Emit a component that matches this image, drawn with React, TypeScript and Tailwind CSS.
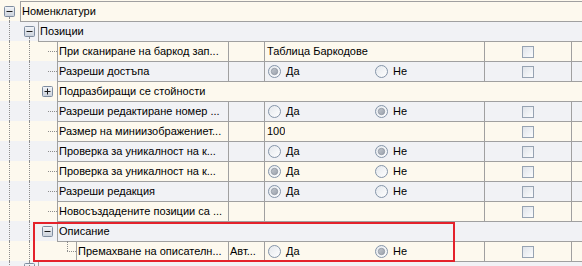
import React from 'react';

type ValueSpec = { text?: string; radio?: 'yes' | 'no' };
type Row =
  | { type: 'group'; level: number; text: string; open: boolean; last?: boolean }
  | { type: 'data'; level: number; name: string; extra?: string; value: ValueSpec };

const rows: Row[] = [
  { type: 'group', level: 0, text: 'Номенклатури', open: true },
  { type: 'group', level: 1, text: 'Позиции', open: true },
  { type: 'data', level: 2, name: 'При сканиране на баркод зап...', value: { text: 'Таблица Баркодове' } },
  { type: 'data', level: 2, name: 'Разреши достъпа', value: { radio: 'yes' } },
  { type: 'group', level: 2, text: 'Подразбиращи се стойности', open: false },
  { type: 'data', level: 2, name: 'Разреши редактиране номер ...', value: { radio: 'no' } },
  { type: 'data', level: 2, name: 'Размер на миниизображениет...', value: { text: '100' } },
  { type: 'data', level: 2, name: 'Проверка за уникалност на к...', value: { radio: 'no' } },
  { type: 'data', level: 2, name: 'Проверка за уникалност на к...', value: { radio: 'yes' } },
  { type: 'data', level: 2, name: 'Разреши редакция', value: { radio: 'yes' } },
  { type: 'data', level: 2, name: 'Новосъздадените позиции са ...', value: {} },
  { type: 'group', level: 2, text: 'Описание', open: true },
  { type: 'data', level: 3, name: 'Премахване на описателн...', extra: 'Авт...', value: { radio: 'no' } },
  { type: 'group', level: 1, text: '', open: false, last: true },
];

const COLW = ['w-[20px]', 'w-[18px]', 'w-[19px]', 'w-[19px]'];
const NAMEW: Record<number, string> = { 0: 'w-[208px]', 1: 'w-[190px]', 2: 'w-[171px]', 3: 'w-[152px]' };

const DOT = 'border-dotted border-[#8c8c8c]';
const TOPLINE = 'shadow-[inset_0_1px_0_#a0a0a0]';
const BOX = 'shadow-[inset_1px_1px_0_#a0a0a0]';

function ExpBtn({ open }: { open: boolean }) {
  return (
    <svg width="11" height="11" viewBox="0 0 11 11" className="block shrink-0">
      <defs>
        <linearGradient id="eb" x1="0" y1="0" x2="0" y2="1">
          <stop offset="0" stopColor="#f4f6f9" />
          <stop offset="1" stopColor="#c9d0da" />
        </linearGradient>
      </defs>
      <rect x="0.5" y="0.5" width="10" height="10" rx="1" fill="url(#eb)" stroke="#7f8da0" />
      <rect x="2.5" y="5" width="6" height="1" fill="#1a1a1a" />
      {!open && <rect x="5" y="2.5" width="1" height="6" fill="#1a1a1a" />}
    </svg>
  );
}

function Radio({ on }: { on: boolean }) {
  return (
    <svg width="13" height="13" viewBox="0 0 13 13" className="block shrink-0">
      <defs>
        <linearGradient id="rg" x1="0" y1="0" x2="1" y2="1">
          <stop offset="0" stopColor="#e3e7ec" />
          <stop offset="1" stopColor="#ffffff" />
        </linearGradient>
        <linearGradient id="rd" x1="0" y1="0" x2="1" y2="1">
          <stop offset="0" stopColor="#c3c8cf" />
          <stop offset="1" stopColor="#9aa1ab" />
        </linearGradient>
      </defs>
      <circle cx="6.5" cy="6.5" r="6" fill="url(#rg)" stroke="#8494a8" />
      {on && <circle cx="6.5" cy="6.5" r="3.2" fill="url(#rd)" stroke="#8d949f" strokeWidth="0.8" />}
    </svg>
  );
}

function Checkbox() {
  return <div className="w-[12px] h-[12px] border border-[#97a3b2] bg-linear-to-br from-[#dfe3e9] to-[#fbfcfd]" />;
}

type Kind = 'v' | 'none' | 'stub' | 'stubTop' | 'btnLine' | 'btn' | 'btnLast';

function IndentCol({ k, kind, top, open }: { k: number; kind: Kind; top: boolean; open?: boolean }) {
  const base = `${COLW[k]} h-full shrink-0 ${top ? TOPLINE : ''}`;
  const off = k < 2 ? 'ml-[9px]' : 'ml-[10px]';
  if (kind === 'v') {
    return (
      <div className={`${base} flex`}>
        <div className={`${off} h-full border-l ${DOT}`} />
      </div>
    );
  }
  if (kind === 'stub') {
    return (
      <div className={`${base} flex flex-col`}>
        <div className="h-[10px]" />
        <div className={`ml-[10px] border-t ${DOT}`} />
      </div>
    );
  }
  if (kind === 'stubTop') {
    return (
      <div className={`${base} flex flex-col`}>
        <div className="h-[10px] flex">
          <div className={`ml-[10px] h-full border-l ${DOT}`} />
        </div>
        <div className={`ml-[10px] border-t ${DOT}`} />
      </div>
    );
  }
  if (kind === 'btnLine' || kind === 'btn') {
    return (
      <div className={`${base} flex flex-col`}>
        <div className="h-[5px]" />
        <div className="ml-[4px]">
          <ExpBtn open={!!open} />
        </div>
        {kind === 'btnLine' && (
          <div className="flex-1 flex">
            <div className={`ml-[9px] h-full border-l ${DOT}`} />
          </div>
        )}
      </div>
    );
  }
  if (kind === 'btnLast') {
    return (
      <div className={`${base} flex flex-col`}>
        <div className="h-[2px] flex">
          <div className={`ml-[9px] h-full border-l ${DOT}`} />
        </div>
        <div className="ml-[4px]">
          <ExpBtn open={false} />
        </div>
      </div>
    );
  }
  return <div className={base} />;
}

function kindsFor(row: Row, idx: number): Kind[] {
  const n = row.level;
  const kinds: Kind[] = [];
  for (let k = 0; k <= n; k++) {
    if (k < n) {
      if (k === 0) kinds.push('v');
      else if (k === 1) kinds.push('v');
      else kinds.push('none');
    } else {
      if (row.type === 'group') {
        if (row.last) kinds.push('btnLast');
        else if (n <= 1) kinds.push('btnLine');
        else kinds.push('btn');
      } else {
        kinds.push(n === 3 ? 'stubTop' : 'stub');
      }
    }
  }
  void idx;
  return kinds;
}

function Value({ v }: { v: ValueSpec }) {
  if (v.text) {
    return <div className="pl-[3px] truncate">{v.text}</div>;
  }
  if (v.radio) {
    return (
      <div className="flex items-center pl-[4px]">
        <div className="w-[107px] flex items-center gap-[5px]">
          <Radio on={v.radio === 'yes'} />
          <span>Да</span>
        </div>
        <div className="flex items-center gap-[5px]">
          <Radio on={v.radio === 'no'} />
          <span>Не</span>
        </div>
      </div>
    );
  }
  return null;
}

export default function App() {
  return (
    <div className="relative w-[582px] h-[266px] overflow-hidden bg-[#fdf9ee] text-[11px] leading-none text-black font-['Liberation_Sans',_Arial,_sans-serif]">
      <div className="h-[1px]" />
      {rows.map((row, i) => {
        const prev = i === 0 ? 99 : rows[i - 1].level;
        const bg = i % 2 === 0 ? 'bg-[#fdf9ee]' : 'bg-[#f1f2f5]';
        const kinds = kindsFor(row, i);
        return (
          <div key={i} className={`flex h-[20px] ${bg}`}>
            {kinds.map((kd, k) => (
              <IndentCol
                key={k}
                k={k}
                kind={kd}
                top={k >= prev + 1}
                open={row.type === 'group' ? row.open : undefined}
              />
            ))}
            {row.type === 'group' ? (
              <div className={`flex-1 flex items-center pl-[2px] pt-[1px] ${BOX}`}>
                <span className="whitespace-nowrap">{row.text}</span>
              </div>
            ) : (
              <>
                <div className={`${NAMEW[row.level]} shrink-0 flex items-center pl-[2px] pt-[1px] overflow-hidden ${BOX}`}>
                  <span className="whitespace-nowrap">{row.name}</span>
                </div>
                <div className={`w-[36px] shrink-0 flex items-center pl-[2px] pt-[1px] overflow-hidden ${BOX}`}>
                  <span className="whitespace-nowrap">{row.extra ?? ''}</span>
                </div>
                <div className={`w-[220px] shrink-0 flex items-center pt-[1px] ${BOX}`}>
                  <Value v={row.value} />
                </div>
                <div className={`w-[87px] shrink-0 flex items-center justify-center pt-[1px] ${BOX}`}>
                  <Checkbox />
                </div>
                <div className={`flex-1 ${BOX}`} />
              </>
            )}
          </div>
        );
      })}
      <div className="absolute left-[33px] top-[222px] w-[422px] h-[40px] border-2 border-[#e4222b]" />
    </div>
  );
}
